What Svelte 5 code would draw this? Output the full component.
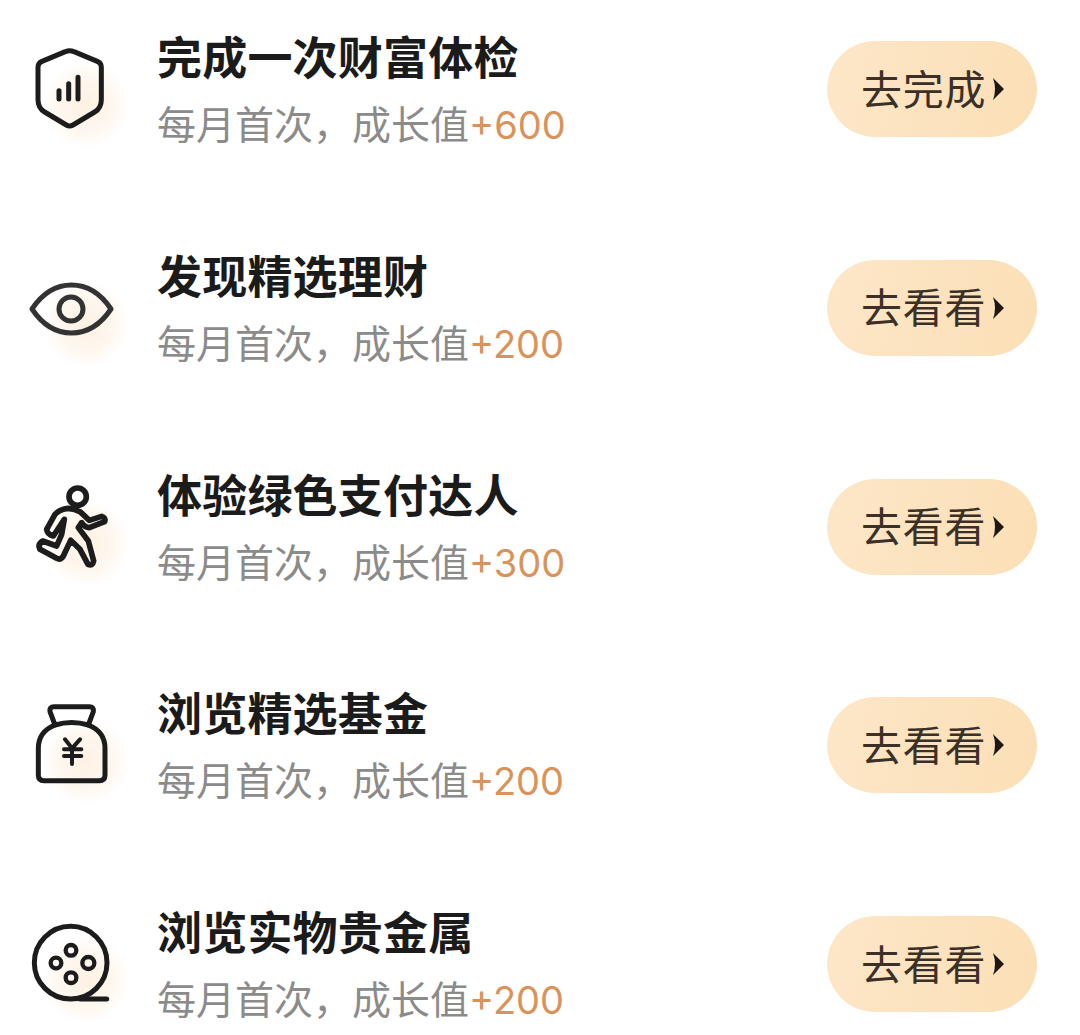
<script>
  const tasks = [
    { icon: 'shield', title: '完成一次财富体检', points: 600, action: '去完成' },
    { icon: 'eye', title: '发现精选理财', points: 200, action: '去看看' },
    { icon: 'runner', title: '体验绿色支付达人', points: 300, action: '去看看' },
    { icon: 'bag', title: '浏览精选基金', points: 200, action: '去看看' },
    { icon: 'film', title: '浏览实物贵金属', points: 200, action: '去看看' }
  ];
</script>

<div class="list">
  {#each tasks as t}
    <div class="row">
      <div class="icon">
        {#if t.icon === 'shield'}
          <svg viewBox="-24 -12 300 300" fill="none" stroke="#1c1c1c" stroke-width="15" stroke-linecap="round" stroke-linejoin="round">
            <path d="M112 26 Q125 20 138 26 L208 55 Q220 60 220 72 V170 Q220 195 200 207 L135 246 Q125 252 115 246 L50 207 Q30 195 30 170 V72 Q30 60 42 55 Z" />
            <path d="M93 143 V168 M122 122 V168 M150 103 V168" stroke-width="15" />
          </svg>
        {:else if t.icon === 'eye'}
          <svg viewBox="0 0 100 100" fill="none" stroke="#333" stroke-width="5" stroke-linejoin="round">
            <path d="M12 51 C22 36 36 27 51.5 27 S81 36 91 51 C81 66 67 75 51.5 75 S22 66 12 51 Z" />
            <circle cx="51" cy="51" r="12" />
          </svg>
        {:else if t.icon === 'runner'}
          <svg viewBox="-30 -12 300 300" fill="none" stroke="#1c1c1c" stroke-width="17" stroke-linecap="round" stroke-linejoin="round">
            <circle cx="143" cy="47" r="26" />
            <path d="M115 82 Q135 84 150 92 L178 118 L215 106 Q228 110 224 122 L178 140 Q165 140 155 125 L145 140 L175 180 L191 240 Q188 256 174 250 L150 205 L122 178 L100 225 Q92 238 80 232 L30 205 Q22 190 38 180 L80 195 L95 160 L103 115 L70 165 Q52 160 50 145 L75 100 Q90 84 115 82 Z" />
          </svg>
        {:else if t.icon === 'bag'}
          <svg viewBox="60 675 300 300" fill="none" stroke="#1c1c1c" stroke-width="15" stroke-linecap="round" stroke-linejoin="round">
            <path d="M165 765 L150 725 Q148 710 162 710 H268 Q282 710 280 725 L265 765" />
            <path d="M165 765 Q115 785 115 835 V915 Q115 932 132 932 H298 Q315 932 315 915 V835 Q315 785 265 765 Q215 750 165 765 Z" />
            <path d="M195 808 L216 835 L240 808 M192 838 H244 M192 858 H244 M216 835 V882" stroke-width="12" />
          </svg>
        {:else}
          <svg viewBox="60 39 300 300" fill="none" stroke="#1c1c1c" stroke-width="15" stroke-linecap="round">
            <circle cx="212" cy="185" r="109" />
            <path d="M240 294 H320" />
            <g stroke-width="13">
              <circle cx="213" cy="148" r="16" />
              <circle cx="168" cy="186" r="16" />
              <circle cx="265" cy="186" r="18" />
              <circle cx="213" cy="230" r="16" />
            </g>
          </svg>
        {/if}
      </div>
      <div class="text">
        <div class="title">{t.title}</div>
        <div class="sub">每月首次，成长值<span class="pts">+{t.points}</span></div>
      </div>
      <div class="btn">
        <span>{t.action}</span>
        <svg class="caret" viewBox="0 0 12 24"><path d="M1 1 L12 12 L1 23 Q5 12 1 1 Z" fill="#1f1812" /></svg>
      </div>
    </div>
  {/each}
</div>

<style>
  :global(body) {
    background: #fff;
    font-family: "Noto Sans CJK SC", "Noto Sans", sans-serif;
  }
  .list {
    height: 1035px;
    overflow: hidden;
    box-sizing: border-box;
    padding: 41px 43px 0 20px;
    display: flex;
    flex-direction: column;
    gap: 122.75px;
  }
  .row {
    flex: none;
    height: 96px;
    display: flex;
    align-items: center;
  }
  .icon {
    position: relative;
    flex: none;
    width: 100px;
    height: 100px;
    margin-right: 38px;
  }
  .icon::before {
    content: '';
    position: absolute;
    left: 24px;
    top: 24px;
    width: 84px;
    height: 84px;
    border-radius: 50%;
    background: radial-gradient(circle, #fdf1e3 0%, #fef8f1 50%, rgba(255, 255, 255, 0) 72%);
  }
  .icon svg {
    position: relative;
    display: block;
    width: 100px;
    height: 100px;
  }
  .text {
    flex: 1;
    display: flex;
    flex-direction: column;
    gap: 14px;
    margin-top: 3px;
  }
  .title {
    font-size: 45px;
    line-height: 52px;
    font-weight: 700;
    letter-spacing: 0.2px;
    color: #1b1b1b;
    margin-left: -1px;
  }
  .sub {
    font-size: 39px;
    line-height: 52px;
    color: #8b8b8b;
    margin-left: -1px;
  }
  .pts {
    font-family: Inter, "Noto Sans", sans-serif;
    font-size: 38px;
    color: #d9935a;
  }
  .btn {
    flex: none;
    width: 210px;
    height: 96px;
    box-sizing: border-box;
    padding: 0 0 5px 34px;
    border-radius: 48px;
    background: linear-gradient(100deg, #fde7c8, #fbdfb6);
    display: flex;
    align-items: center;
    gap: 6px;
    font-size: 41px;
    letter-spacing: 0.7px;
    color: #3a3028;
  }
  .caret {
    width: 12px;
    height: 24px;
    margin-top: 5px;
  }
</style>
